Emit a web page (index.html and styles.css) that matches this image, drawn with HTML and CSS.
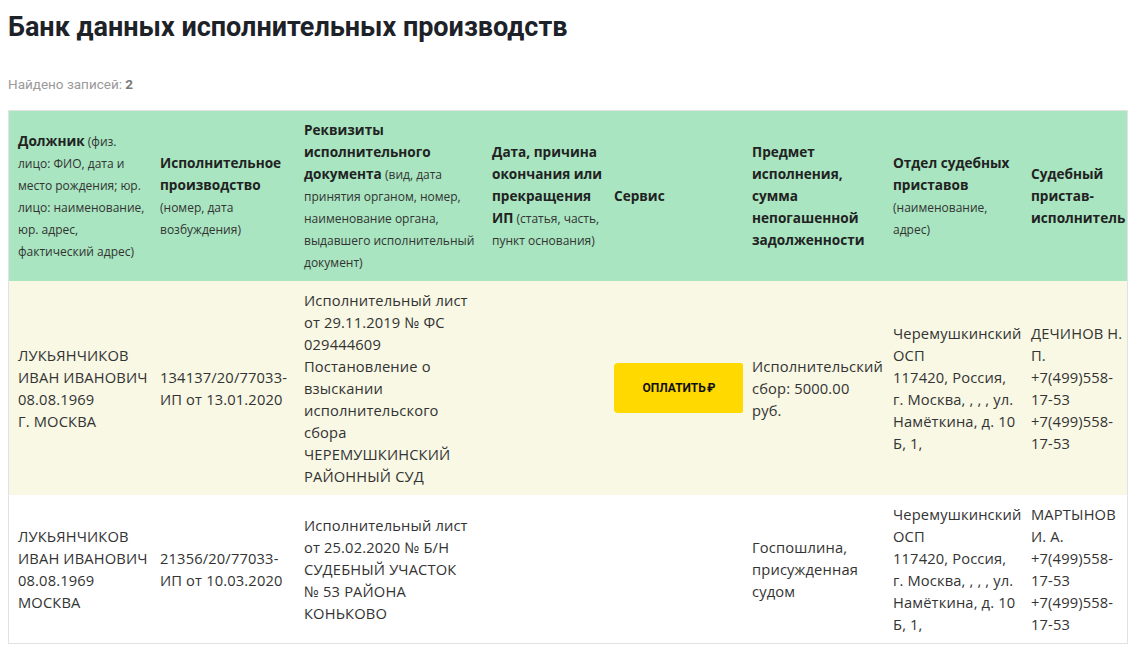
FILE: index.html
```html
<!DOCTYPE html>
<html lang="ru">
<head>
<meta charset="utf-8">
<title>Банк данных исполнительных производств</title>
<link rel="stylesheet" href="styles.css">
</head>
<body>
<main class="page">
  <h1 class="title">Банк данных исполнительных производств</h1>
  <p class="count">Найдено записей: <b>2</b></p>
  <div class="table-wrap">
    <table class="results">
      <colgroup>
        <col class="c1"><col class="c2"><col class="c3"><col class="c4"><col class="c5"><col class="c6"><col class="c7"><col class="c8">
      </colgroup>
      <thead>
        <tr>
          <th><b>Должник</b><span class="hint"> (физ. лицо: ФИО, дата и место рождения; юр. лицо: наименование, юр. адрес, фактический адрес)</span></th>
          <th><b>Исполнительное производство</b><span class="hint"> (номер, дата возбуждения)</span></th>
          <th><b>Реквизиты исполнительного документа</b><span class="hint"> (вид, дата принятия органом, номер, наименование органа, выдавшего исполнительный документ)</span></th>
          <th><b>Дата, причина окончания или прекращения ИП</b><span class="hint"> (статья, часть, пункт основания)</span></th>
          <th><b>Сервис</b></th>
          <th><b>Предмет исполнения, сумма непогашенной задолженности</b></th>
          <th><b>Отдел судебных приставов</b><span class="hint"> (наименование, адрес)</span></th>
          <th><b>Судебный пристав-исполнитель</b></th>
        </tr>
      </thead>
      <tbody>
        <tr class="row-hl">
          <td>ЛУКЬЯНЧИКОВ ИВАН ИВАНОВИЧ<br>08.08.1969<br>Г. МОСКВА</td>
          <td>134137/20/77033-ИП от 13.01.2020</td>
          <td>Исполнительный лист от 29.11.2019 № ФС 029444609<br>Постановление о взыскании исполнительского сбора<br>ЧЕРЕМУШКИНСКИЙ РАЙОННЫЙ СУД</td>
          <td></td>
          <td><button class="pay" type="button">ОПЛАТИТЬ&#8202;₽</button></td>
          <td>Исполнительский сбор: 5000.00<br>руб.</td>
          <td>Черемушкинский ОСП<br>117420, Россия, г.&nbsp;Москва, , , , ул. Намёткина, д.&nbsp;10 Б, 1,</td>
          <td>ДЕЧИНОВ Н. П.<br>+7(499)558-17-53<br>+7(499)558-17-53</td>
        </tr>
        <tr>
          <td>ЛУКЬЯНЧИКОВ ИВАН ИВАНОВИЧ<br>08.08.1969<br>МОСКВА</td>
          <td>21356/20/77033-ИП от 10.03.2020</td>
          <td>Исполнительный лист от 25.02.2020 № Б/Н<br>СУДЕБНЫЙ УЧАСТОК<br>№ 53 РАЙОНА КОНЬКОВО</td>
          <td></td>
          <td></td>
          <td>Госпошлина, присужденная судом</td>
          <td>Черемушкинский ОСП<br>117420, Россия, г.&nbsp;Москва, , , , ул. Намёткина, д.&nbsp;10 Б, 1,</td>
          <td>МАРТЫНОВ И. А.<br>+7(499)558-17-53<br>+7(499)558-17-53</td>
        </tr>
      </tbody>
    </table>
  </div>
</main>
</body>
</html>
```

FILE: styles.css
```css
html, body {
  margin: 0;
  padding: 0;
  background: #ffffff;
}
body {
  font-family: Roboto, "Liberation Sans", Arial, sans-serif;
  color: #2b2b2b;
}
.page {
  padding: 0 10px 0 8px;
}
.title {
  margin: 0;
  padding-top: 11px;
  font-size: 27px;
  line-height: 32px;
  font-weight: 700;
  color: #1d2229;
}
.count {
  margin: 33px 0 0;
  font-size: 13.5px;
  line-height: 16px;
  color: #9a9a9a;
}
.count b {
  color: #7a7a7a;
}
.table-wrap {
  margin-top: 18px;
  border: 1px solid #e2e2e2;
  overflow: hidden;
  width: 1118px;
}
.results {
  border-collapse: collapse;
  table-layout: fixed;
  width: 1118px;
  font-family: "Open Sans", "Noto Sans", sans-serif;
}
.c1 { width: 142px; }
.c2 { width: 144px; }
.c3 { width: 188px; }
.c4 { width: 122px; }
.c5 { width: 138px; }
.c6 { width: 141px; }
.c7 { width: 138px; }
.c8 { width: 105px; }
.results th,
.results td {
  padding: 8px 0 8px 9px;
  vertical-align: middle;
  text-align: left;
  line-height: 22px;
}
.results thead th {
  background: #a8e5c0;
  font-size: 13.6px;
  font-weight: 400;
  color: #222222;
}
.results thead b {
  font-weight: 700;
}
.hint {
  font-size: 12px;
  line-height: 1;
  color: #333333;
}
.results td {
  font-size: 14.7px;
  letter-spacing: 0.15px;
  color: #333333;
}
.row-hl td {
  background: #f8f8e4;
}
.pay {
  display: block;
  width: 130px;
  height: 50px;
  border: 0;
  border-radius: 4px;
  background: #ffd900;
  color: #111111;
  font-family: Roboto, "Liberation Sans", Arial, sans-serif;
  font-size: 12px;
  font-weight: 700;
  letter-spacing: 0;
  cursor: pointer;
}
```
